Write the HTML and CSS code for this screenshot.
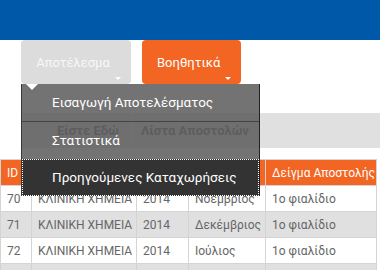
FILE: index.html
```html
<!DOCTYPE html>
<html>
  <head>
    <title>Λίστα Αποστολών</title>
    <link rel="stylesheet" href="styles.css">
  </head>
  <body>
    <div class="topbar"></div>

    <div class="toolbar">
      <div class="menu-wrap">
        <button class="tool-btn grey">Αποτέλεσμα<span class="caret"></span></button>
        <ul class="dropdown">
          <li>Εισαγωγή Αποτελέσματος</li>
          <li>Στατιστικά</li>
          <li class="active">Προηγούμενες Καταχωρήσεις</li>
        </ul>
      </div>
      <button class="tool-btn orange">Βοηθητικά<span class="caret"></span></button>
    </div>

    <div class="breadcrumb">
      <span class="crumb">Είστε Εδώ</span>
      <span class="crumb current">Λίστα Αποστολών</span>
    </div>

    <table class="results">
      <thead>
        <tr>
          <th class="c-id">ID</th>
          <th class="c-lab">Εργαστήριο</th>
          <th class="c-year">Έτος</th>
          <th class="c-month">Μήνας</th>
          <th class="c-sample">Δείγμα Αποστολής</th>
        </tr>
      </thead>
      <tbody>
        <tr>
          <td>70</td>
          <td>ΚΛΙΝΙΚΗ ΧΗΜΕΙΑ</td>
          <td>2014</td>
          <td>Νοέμβριος</td>
          <td>1ο φιαλίδιο</td>
        </tr>
        <tr class="odd">
          <td>71</td>
          <td>ΚΛΙΝΙΚΗ ΧΗΜΕΙΑ</td>
          <td>2014</td>
          <td>Δεκέμβριος</td>
          <td>1ο φιαλίδιο</td>
        </tr>
        <tr>
          <td>72</td>
          <td>ΚΛΙΝΙΚΗ ΧΗΜΕΙΑ</td>
          <td>2014</td>
          <td>Ιούλιος</td>
          <td>1ο φιαλίδιο</td>
        </tr>
        <tr class="odd">
          <td>73</td>
          <td>ΚΛΙΝΙΚΗ ΧΗΜΕΙΑ</td>
          <td>2015</td>
          <td>Ιανουάριος</td>
          <td>1ο φιαλίδιο</td>
        </tr>
      </tbody>
    </table>
  </body>
</html>
```

FILE: styles.css
```css
html, body {
    margin: 0;
    padding: 0;
}

body {
    font-family: Roboto, 'Noto Sans', sans-serif;
    background: #fff;
    overflow: hidden;
}

.topbar {
    height: 40px;
    background-color: #0059a8;
}

.toolbar {
    display: flex;
    gap: 11px;
    padding-left: 21px;
}

.menu-wrap {
    position: relative;
}

.tool-btn {
    position: relative;
    height: 44px;
    padding: 0 21px 0 15px;
    border: none;
    border-radius: 4px;
    font-family: Roboto, sans-serif;
    font-size: 13px;
    color: #fff;
    cursor: pointer;
}

.tool-btn.grey {
    width: 110px;
    background-color: #dcdcdc;
    color: #f7f7f7;
}

.tool-btn.orange {
    width: 99px;
    background-color: #f26522;
}

.caret {
    position: absolute;
    right: 10px;
    bottom: 4px;
    border-left: 3px solid transparent;
    border-right: 3px solid transparent;
    border-top: 3px solid #fff;
}

/* dropdown of the first button, lies over the page */
.dropdown {
    position: absolute;
    top: 44px;
    left: 0;
    z-index: 5;
    width: 237px;
    margin: 0;
    padding: 0;
    list-style: none;
    border-left: 1px solid #3a3a3a;
    border-right: 1px solid #222;
}

.dropdown::before {
    content: "";
    position: absolute;
    top: 0;
    left: 4px;
    z-index: 2;
    border-left: 6px solid transparent;
    border-right: 6px solid transparent;
    border-top: 6px solid #fff;
}

.dropdown li {
    height: 37px;
    line-height: 37px;
    padding-left: 30px;
    font-size: 13.5px;
    color: #fff;
    white-space: nowrap;
    background-color: rgba(94, 94, 94, 0.87);
}

.dropdown li:first-child {
    border-bottom: 1px solid #444;
}

.dropdown li.active {
    background-color: #333;
    outline: 1px dotted #fff;
    outline-offset: -1px;
}

.breadcrumb {
    display: flex;
    align-items: center;
    height: 35px;
    margin: 29px 0 11px 21px;
    padding-left: 36px;
    background-color: #e0e0e0;
}

.crumb {
    width: 74px;
    font-size: 13px;
    font-weight: bold;
    color: #555;
    white-space: nowrap;
}

.crumb.current {
    width: auto;
    border-left: 1px solid #f0f0f0;
    padding-left: 9px;
    line-height: 35px;
}

.results {
    border-collapse: collapse;
    table-layout: fixed;
    width: 377px;
    font-size: 12px;
    color: #666;
}

.results th,
.results td {
    height: 25px;
    padding: 0 2px 0 6px;
    border: 1px solid #d4d4d4;
    text-align: left;
    white-space: nowrap;
    overflow: hidden;
}

.results th {
    background-color: #f26522;
    color: #fff;
    font-weight: normal;
}

.results tr.odd td {
    background-color: #e0e0e0;
}

.c-id { width: 22px; }
.c-lab { width: 96px; }
.c-year { width: 43px; }
.c-month { width: 68px; }
.c-sample { width: 102px; }
```
